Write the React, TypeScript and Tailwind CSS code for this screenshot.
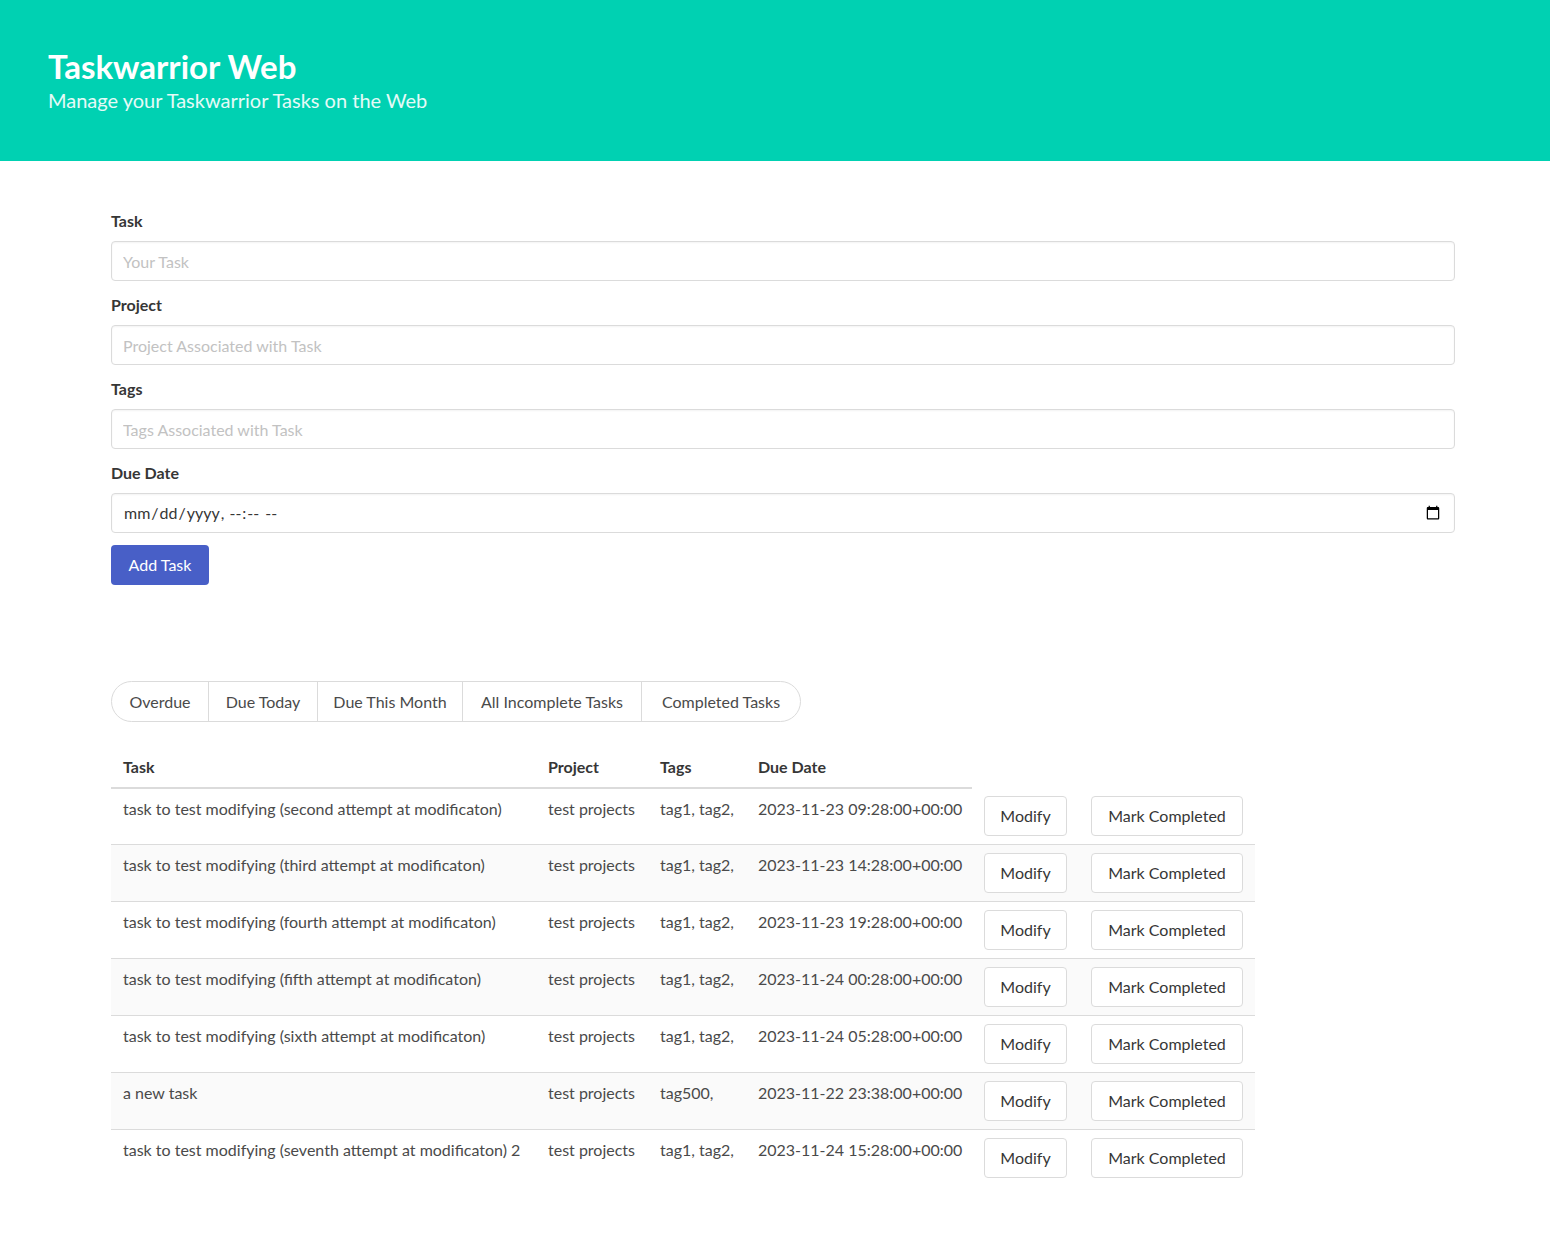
import React from "react";

const tasks = [
  { task: "task to test modifying (second attempt at modificaton)", project: "test projects", tags: "tag1, tag2,", due: "2023-11-23 09:28:00+00:00" },
  { task: "task to test modifying (third attempt at modificaton)", project: "test projects", tags: "tag1, tag2,", due: "2023-11-23 14:28:00+00:00" },
  { task: "task to test modifying (fourth attempt at modificaton)", project: "test projects", tags: "tag1, tag2,", due: "2023-11-23 19:28:00+00:00" },
  { task: "task to test modifying (fifth attempt at modificaton)", project: "test projects", tags: "tag1, tag2,", due: "2023-11-24 00:28:00+00:00" },
  { task: "task to test modifying (sixth attempt at modificaton)", project: "test projects", tags: "tag1, tag2,", due: "2023-11-24 05:28:00+00:00" },
  { task: "a new task", project: "test projects", tags: "tag500,", due: "2023-11-22 23:38:00+00:00" },
  { task: "task to test modifying (seventh attempt at modificaton) 2", project: "test projects", tags: "tag1, tag2,", due: "2023-11-24 15:28:00+00:00" },
];

const tabs = [
  { label: "Overdue", w: "w-[98px]" },
  { label: "Due Today", w: "w-[110px]" },
  { label: "Due This Month", w: "w-[146px]" },
  { label: "All Incomplete Tasks", w: "w-[180px]" },
  { label: "Completed Tasks", w: "w-[160px]" },
];

function Field({ label, placeholder }: { label: string; placeholder: string }) {
  return (
    <div className="mb-3">
      <label className="block mb-2 font-bold text-[#363636] leading-6">{label}</label>
      <input
        className="w-full h-10 px-[11px] border border-[#dbdbdb] rounded bg-white text-[#363636] placeholder:text-[#c2c2c2] outline-none shadow-[inset_0_1px_2px_rgba(10,10,10,0.05)]"
        placeholder={placeholder}
      />
    </div>
  );
}

export default function App() {
  return (
    <div className="min-h-[1234px] bg-white text-[#4a4a4a] text-base" style={{ fontFamily: "Lato, 'Noto Sans', sans-serif" }}>
      <section className="bg-[#00d1b2] px-12 py-12">
        <h1 className="text-[33px] font-bold leading-[36px] text-white">Taskwarrior Web</h1>
        <h2 className="mt-1 text-[20px] leading-[25px] text-white/90">Manage your Taskwarrior Tasks on the Web</h2>
      </section>

      <section className="pt-12 pb-12 pl-[111px]">
        <div className="w-[1344px]">
          <Field label="Task" placeholder="Your Task" />
          <Field label="Project" placeholder="Project Associated with Task" />
          <Field label="Tags" placeholder="Tags Associated with Task" />
          <div className="mb-3">
            <label className="block mb-2 font-bold text-[#363636] leading-6">Due Date</label>
            <input
              type="datetime-local"
              className="w-full h-10 px-[11px] border border-[#dbdbdb] rounded bg-white text-[#363636] outline-none shadow-[inset_0_1px_2px_rgba(10,10,10,0.05)]"
            />
          </div>
          <button className="h-10 w-[98px] rounded bg-[#485fc7] text-white">Add Task</button>
        </div>
      </section>

      <section className="pt-12 pb-12 pl-[111px]">
        <ul className="flex mb-[25px]">
          {tabs.map((t, i) => (
            <li key={t.label} className={i > 0 ? "-ml-px" : ""}>
              <a
                className={
                  "flex h-[41px] items-center justify-center border border-[#dbdbdb] " +
                  t.w +
                  (i === 0 ? " rounded-l-full" : "") +
                  (i === tabs.length - 1 ? " rounded-r-full" : "")
                }
              >
                {t.label}
              </a>
            </li>
          ))}
        </ul>

        <table className="table-fixed border-collapse w-[1144px]">
          <colgroup>
            <col className="w-[425px]" />
            <col className="w-[112px]" />
            <col className="w-[98px]" />
            <col className="w-[226px]" />
            <col className="w-[107px]" />
            <col className="w-[176px]" />
          </colgroup>
          <thead>
            <tr>
              {["Task", "Project", "Tags", "Due Date"].map((h) => (
                <th key={h} className="text-left font-bold text-[#363636] px-3 py-2 leading-6 border-b-2 border-[#dbdbdb]">
                  {h}
                </th>
              ))}
            </tr>
          </thead>
          <tbody>
            {tasks.map((t, i) => {
              const last = i === tasks.length - 1;
              const td = "align-top px-3 py-2 leading-6 whitespace-nowrap " + (last ? "" : "border-b border-[#dbdbdb]");
              return (
                <tr key={i} className={i % 2 === 1 ? "bg-[#fafafa]" : ""}>
                  <td className={td}>{t.task}</td>
                  <td className={td}>{t.project}</td>
                  <td className={td}>{t.tags}</td>
                  <td className={td}>{t.due}</td>
                  <td className={td}>
                    <button className="h-10 w-[83px] rounded border border-[#dbdbdb] bg-white text-[#363636]">Modify</button>
                  </td>
                  <td className={td}>
                    <button className="h-10 w-[152px] rounded border border-[#dbdbdb] bg-white text-[#363636]">Mark Completed</button>
                  </td>
                </tr>
              );
            })}
          </tbody>
        </table>
      </section>
    </div>
  );
}
